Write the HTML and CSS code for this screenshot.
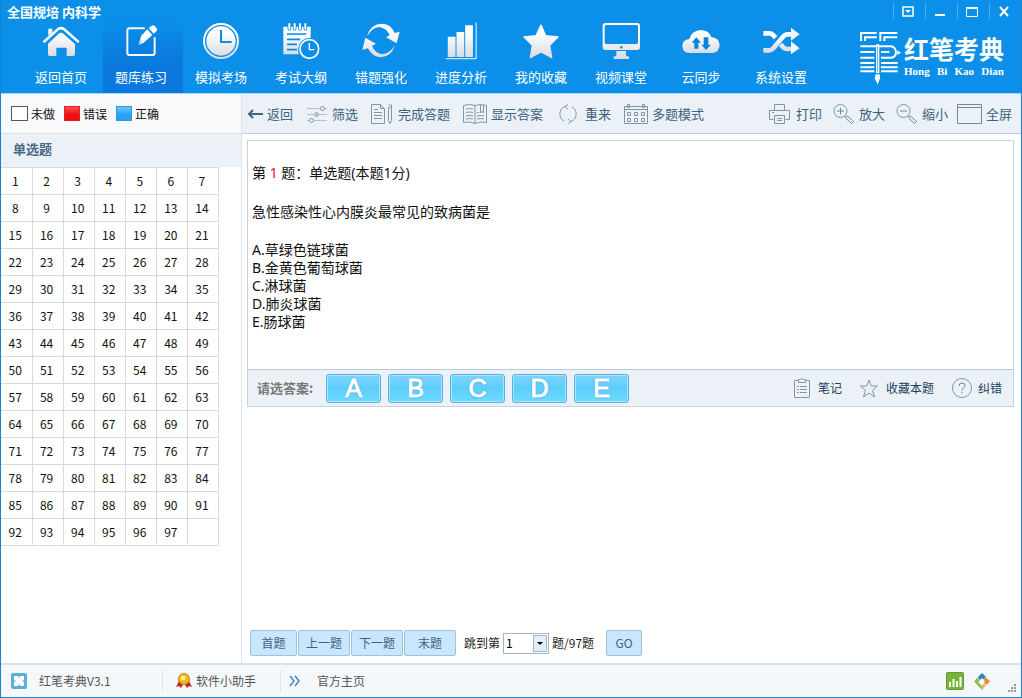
FILE: index.html
```html
<!DOCTYPE html>
<html lang="zh-CN">
<head>
<meta charset="utf-8">
<title>全国规培 内科学</title>
<link rel="stylesheet" href="styles.css">
</head>
<body>
<svg class="defs" aria-hidden="true">
  <defs>
    <linearGradient id="metal" x1="0" y1="0" x2="0" y2="1">
      <stop offset="0.2" stop-color="#ffffff"/>
      <stop offset="1" stop-color="#d9dde2"/>
    </linearGradient>
  </defs>
</svg>
<div class="window">
  <header class="header">
    <div class="header-left">
      <h1 class="title">全国规培 内科学</h1>
      <nav class="nav">
        <button class="nav-item" type="button">
          <svg class="nav-icon" viewBox="130 66 114 114"><path fill="url(#metal)" d="M132 124 L176 84 Q187 76 198 84 L243 124 L238 130 L194 91 Q187 86 180 91 L137 130Z M149 86h12v10l-12 11z M148 131 L180 101 Q187 95 194 101 L229 132 V163 Q229 168 224 168 H204 V146 Q204 143 201 143 H176 Q173 143 173 146 V168 H153 Q148 168 148 163Z"/></svg>
          <span>返回首页</span>
        </button>
        <button class="nav-item active" type="button">
          <svg class="nav-icon" viewBox="368 66 114 114"><path fill="none" stroke="#f4f6f8" stroke-width="6" d="M436 85H391Q384 85 384 92V158Q384 165 391 165H459Q466 165 466 158V112"/><path fill="#fff" d="M448 84 L458 77 Q463 74 467 79 L472 85 Q476 89 471 94 L463 101Z M444 88 L459 105 L433 128 L417 135 L423 118 L425 108Z"/><path stroke="#1483dd" stroke-width="2" d="M417 135 L428 122"/></svg>
          <span>题库练习</span>
        </button>
        <button class="nav-item" type="button">
          <svg class="nav-icon" viewBox="610 66 114 114"><circle cx="667" cy="123" r="51" fill="none" stroke="url(#metal)" stroke-width="6"/><circle cx="667" cy="123" r="44" fill="url(#metal)"/><path fill="none" stroke="#0b8bea" stroke-width="6" d="M667 90V126H699"/></svg>
          <span>模拟考场</span>
        </button>
        <button class="nav-item" type="button">
          <svg class="nav-icon" viewBox="848 66 114 114"><path fill="url(#metal)" d="M852 80H934V113Q902 114 896 146Q896 155 899 163H852Z"/><path fill="none" stroke="#0b8bea" stroke-width="5" d="M863 102H921 M863 118H902 M863 133H893 M863 149H893"/><path fill="none" stroke="#0b8bea" stroke-width="11" stroke-linecap="round" d="M870 74V86 M886 74V86 M902 74V86 M918 74V86"/><path fill="none" stroke="#fff" stroke-width="6" stroke-linecap="round" d="M870 72V86 M886 72V86 M902 72V86 M918 72V86"/><circle cx="930" cy="147" r="28" fill="none" stroke="#fff" stroke-width="5"/><path fill="none" stroke="#fff" stroke-width="4" d="M930 129V149H945"/></svg>
          <span>考试大纲</span>
        </button>
        <button class="nav-item" type="button">
          <svg class="nav-icon" viewBox="71 66 114 114"><path fill="url(#metal)" d="M86 109 Q95 73 129 71 Q158 71 169 99 L184 95 L175 130 L143 112 L154 106 Q145 84 123 81 Q101 82 86 109Z M169 137 Q160 169 127 172 Q102 171 89 145 L72 150 L81 113 L113 131 L101 138 Q110 159 131 163 Q154 160 169 137Z"/></svg>
          <span>错题强化</span>
        </button>
        <button class="nav-item" type="button">
          <svg class="nav-icon" viewBox="308 68 114 118"><path fill="url(#metal)" d="M324 114h24v63h-24z M351 99h24v78h-24z M378 78h24v99h-24z"/><path fill="none" stroke="#fff" stroke-width="3" d="M318 182H412V69"/></svg>
          <span>进度分析</span>
        </button>
        <button class="nav-item" type="button">
          <svg class="nav-icon" viewBox="550 66 114 114"><path fill="url(#metal)" stroke="url(#metal)" stroke-width="4" stroke-linejoin="round" d="M607 75 L621 107 L658 111 L633 136 L639 173 L607 156 L575 173 L581 136 L556 111 L592 107Z"/></svg>
          <span>我的收藏</span>
        </button>
        <button class="nav-item" type="button">
          <svg class="nav-icon" viewBox="790 66 114 114"><path fill="url(#metal)" fill-rule="evenodd" d="M800 69H896Q904 69 904 77V142Q904 150 896 150H800Q792 150 792 142V77Q792 69 800 69Z M803 75Q798 75 798 80V127Q798 132 803 132H893Q898 132 898 127V80Q898 75 893 75Z M833 153H862V169H871V177H825V169H833Z"/><circle cx="848" cy="142" r="4" fill="#2689ce"/></svg>
          <span>视频课堂</span>
        </button>
        <button class="nav-item" type="button">
          <svg class="nav-icon" viewBox="11 66 114 114"><path fill="url(#metal)" d="M33 159 Q12 157 12 137 Q13 119 33 117 Q39 93 66 90 Q91 90 99 111 Q123 114 124 136 Q122 157 103 159Z"/><path fill="#0b83dc" d="M40 128 L54 112 L68 128 H60 V146 H48 V128Z M69 134 L83 150 L98 134 H90 V112 H76 V134Z"/></svg>
          <span>云同步</span>
        </button>
        <button class="nav-item" type="button">
          <svg class="nav-icon" viewBox="249 66 114 114"><path fill="none" stroke="url(#metal)" stroke-width="14" stroke-linejoin="round" d="M253 100H271Q277 100 282 105L290 113 M305 133L313 142Q318 147 323 147H340 M253 151H271Q277 151 282 146L312 110Q318 103 325 103H340"/><path fill="#f4f5f7" d="M336 83L362 103L336 122Z M336 124L362 145L336 163Z"/></svg>
          <span>系统设置</span>
        </button>
      </nav>
    </div>
    <div class="header-right">
      <div class="controls">
        <button class="control" type="button" aria-label="菜单"><svg width="12" height="11" viewBox="0 0 12 11"><path d="M1 1h10v9H1z" fill="none" stroke="#fff" stroke-width="1.5"/><path d="M3 4h6L6 7z" fill="#fff"/></svg></button>
        <button class="control" type="button" aria-label="最小化"><svg width="12" height="11" viewBox="0 0 12 11"><path d="M1 8h10v2H1z" fill="#fff"/></svg></button>
        <button class="control" type="button" aria-label="最大化"><svg width="12" height="11" viewBox="0 0 12 11"><path d="M.5 2.500h11v8H.5z" fill="none" stroke="#fff"/><path d="M0 2h12" stroke="#fff" stroke-width="2"/></svg></button>
        <button class="control" type="button" aria-label="关闭"><svg width="12" height="11" viewBox="0 0 12 11"><path d="M2 1l8 9M10 1l-8 9" stroke="#fff" stroke-width="2"/></svg></button>
      </div>
      <div class="logo">
        <svg width="42" height="54" viewBox="536 96 126 162"><path fill="none" stroke="#fff" stroke-width="6" d="M542 126V102H589 M554 126V115H589 M600 126V102H651 M612 126V115H651 M540 142H632Q646 144 647 160Q646 175 632 176H602 M540 159H582 M602 159H627 M540 176H582 M540 192H582 M602 192H652 M540 205H582 M602 205H652 M540 217H582 M602 217H652"/><path stroke="#fff" stroke-width="10" d="M592 136V222"/><path stroke="#0b8bea" stroke-width="2" d="M592 142V218"/><path fill="#fff" d="M586 226h12q3 12-2 20l-4 11q-2-8-7-14-4-8 1-17z M651 154l11 7-11 7z"/></svg>
        <div class="logo-text">
          <span class="logo-name">红笔考典</span>
          <span class="logo-pinyin"><span>Hong</span><span>Bi</span><span>Kao</span><span>Dian</span></span>
        </div>
      </div>
    </div>
  </header>

  <div class="main">
    <aside class="sidebar">
      <ul class="legend">
        <li><span class="swatch todo"></span>未做</li>
        <li><span class="swatch wrong"></span>错误</li>
        <li><span class="swatch right"></span>正确</li>
      </ul>
      <h2 class="section">单选题</h2>
      <table class="numbers"><tbody id="numbers"></tbody></table>
    </aside>

    <main class="content">
      <div class="toolbar">
        <div class="tools">
          <button class="tool" type="button"><svg width="16" height="12" viewBox="0 0 16 12"><path d="M2 6h14M6 2L2 6l4 4" fill="none" stroke="#416582" stroke-width="2"/></svg>返回</button>
          <button class="tool" type="button"><svg width="22" height="18" viewBox="0 0 22 18"><g fill="none" stroke="#8197a9"><path d="M1 3.500h13M19 3.500h2M1 9.500h7M13 9.500h8M1 15.500h2M8 15.500h13" opacity=".55"/><circle cx="16.500" cy="3.500" r="2"/><path d="M9 8h3v3H9z"/><circle cx="5.500" cy="15.500" r="2"/></g></svg>筛选</button>
          <button class="tool wide" type="button"><svg width="21" height="20" viewBox="0 0 21 20"><path d="M.5.500h9l4 4v15H.5zM9.500.500v4h4M3 5.500h4M3 8.500h8M3 11.500h8M3 14.500h8M17.500 3.500h3v13l-1.500 3-1.500-3zM17.500 1h3v2.500" fill="none" stroke="#8197a9"/></svg>完成答题</button>
          <button class="tool" type="button"><svg width="24" height="20" viewBox="0 0 24 20"><path d="M.5 1.500Q7-.5 12 1.500Q17-.5 23.500 1.500V18.500Q17 17 12 19.500Q7 17 .5 18.500zM12 1.500v18M3 5q4-1 7 0M3 8.500q4-1 7 0M3 12q4-1 7 0M3 15q4-1 7 0M14 8.500h2M14 12q4-1 7 0M14 15q4-1 7 0M17.500 1v8l1.500-1.500L20.500 9V1" fill="none" stroke="#8197a9"/></svg>显示答案</button>
          <button class="tool redo" type="button"><svg width="18" height="20" viewBox="0 0 18 20"><path d="M6 2.500A8 8 0 0 0 5 17M12 17.500A8 8 0 0 0 13 3M9 .500L6 2.500L9 5M9 15L12 17.500L9 20" fill="none" stroke="#8197a9"/></svg>重来</button>
          <button class="tool" type="button"><svg width="24" height="20" viewBox="0 0 24 20"><path d="M.5 2.500h23v17H.5zM.5 5.500h23M3.500.500h2v3h-2zM18.500.500h2v3h-2zM3.500 8.500h3v3h-3zM10.500 8.500h3v3h-3zM17.500 8.500h3v3h-3zM3.500 14.500h3v3h-3zM10.500 14.500h3v3h-3zM17.500 14.500h3v3h-3z" fill="none" stroke="#8197a9"/></svg>多题模式</button>
        </div>
        <div class="tools view">
          <button class="tool wide" type="button"><svg width="21" height="20" viewBox="0 0 21 20"><path d="M5.500 7V.500h10V7M4.500 15.500h-4v-9h20v9h-4M5.500 11.500h10v8h-10zM8 14.500h5M8 16.500h5M3 8.500h2" fill="none" stroke="#8197a9"/></svg>打印</button>
          <button class="tool" type="button"><svg width="22" height="20" viewBox="0 0 22 20"><circle cx="7.500" cy="7" r="6.500" fill="none" stroke="#8197a9"/><path d="M4 7h7M7.500 3.500v7M12 11.500l1.500 1.500M12.500 14l2-2 6 5.500-2 2z" fill="none" stroke="#71899d"/></svg>放大</button>
          <button class="tool" type="button"><svg width="22" height="20" viewBox="0 0 22 20"><circle cx="7.500" cy="7" r="6.500" fill="none" stroke="#8197a9"/><path d="M4 7h7M12 11.500l1.500 1.500M12.500 14l2-2 6 5.500-2 2z" fill="none" stroke="#71899d"/></svg>缩小</button>
          <button class="tool full" type="button"><svg width="25" height="20" viewBox="0 0 25 20"><path d="M.5.500h24v19H.5zM.5 3.500h24" fill="none" stroke="#71899d"/></svg>全屏</button>
        </div>
      </div>

      <section class="card">
        <div class="question">
          <p>第 <span class="red">1</span> 题<span class="colon">：</span>单选题(本题1分)</p>
          <p>急性感染性心内膜炎最常见的致病菌是</p>
          <ul class="options">
            <li>A.草绿色链球菌</li>
            <li>B.金黄色葡萄球菌</li>
            <li>C.淋球菌</li>
            <li>D.肺炎球菌</li>
            <li>E.肠球菌</li>
          </ul>
        </div>
        <div class="answer-bar">
          <span class="answer-label">请选答案:</span>
          <div class="answers">
            <button class="answer" type="button">A</button>
            <button class="answer" type="button">B</button>
            <button class="answer" type="button">C</button>
            <button class="answer" type="button">D</button>
            <button class="answer" type="button">E</button>
          </div>
          <div class="actions">
            <button class="action" type="button"><svg width="16" height="20" viewBox="0 0 16 20"><path d="M4 2.500H.5v17h15v-17H12M4.500 4.500v-3h2q1.500-2 3 0h2v3zM3 8.500h2M6 8.500h7M3 11.500h2M6 11.500h7M3 14.500h2M6 14.500h7" fill="none" stroke="#8197a9"/></svg>笔记</button>
            <button class="action" type="button"><svg width="18" height="19" viewBox="0 0 18 19"><path d="M9 1l2.200 6H17.500l-5 4.300L14.500 18 9 14l-5.500 4 2-6.700L.5 7h6.300z" fill="none" stroke="#8197a9"/></svg>收藏本题</button>
            <button class="action tight" type="button"><svg width="20" height="20" viewBox="0 0 20 20"><circle cx="10" cy="10" r="9.500" fill="none" stroke="#8197a9"/><path d="M7 8q0-3 3-3t3 2.500q0 1.500-1.500 2.500T10 12.500M10 14v1.500" fill="none" stroke="#71899d"/></svg>纠错</button>
          </div>
        </div>
      </section>

      <div class="pager">
        <div class="pager-buttons">
          <button class="page-button short" type="button">首题</button>
          <button class="page-button" type="button">上一题</button>
          <button class="page-button" type="button">下一题</button>
          <button class="page-button" type="button">末题</button>
        </div>
        <label for="jump">跳到第</label>
        <span class="select-box">
          <select id="jump"><option>1</option><option>2</option><option>3</option></select>
          <svg class="select-arrow" width="14" height="17" viewBox="0 0 14 17"><path d="M.5.500h13v16H.5z" fill="#e3edf9" stroke="#9fb8ce"/><path d="M4 7h6L7 10z" fill="#000"/></svg>
        </span>
        <span>题/97题</span>
        <button class="page-button go" type="button">GO</button>
      </div>
    </main>
  </div>

  <footer class="footer">
    <div class="foot-item brand"><svg width="16" height="16" viewBox="0 0 16 16"><rect width="16" height="16" rx="2" fill="#5eb0d2"/><path d="M3 3h4l1 2 1-2h4v4l-2 1 2 1v4H9l-1-2-1 2H3V9l2-1-2-1z" fill="#fff"/></svg><span>红笔考典V3.1</span></div>
    <div class="foot-item helper"><svg width="16" height="16" viewBox="0 0 16 16"><path d="M3 8L0 14l3-1 2 2 3-5 3 5 2-2 3 1-3-6z" fill="#b52b20"/><circle cx="8" cy="6" r="5.500" fill="#f2b51f" stroke="#c88414"/><circle cx="7" cy="5" r="2.500" fill="#ffe995"/></svg><span>软件小助手</span></div>
    <a class="foot-item home" href="#"><svg width="12" height="12" viewBox="0 0 12 12"><path d="M1 1l4 5-4 5M6 1l4 5-4 5" fill="none" stroke="#4b83b5" stroke-width="1.500"/></svg><span>官方主页</span></a>
    <div class="tray">
      <svg width="18" height="18" viewBox="0 0 18 18"><rect x=".5" y=".5" width="17" height="17" rx="1" fill="#78b43c" stroke="#5f9c2c"/><path d="M3 10h2v5H3zM6.500 7h2v8h-2zM10 9h2v6h-2zM13.500 5h2v10h-2z" fill="#fff"/></svg>
      <svg width="16" height="17" viewBox="0 0 16 17"><path d="M4 4l4-4 4 4-2.500 2.500L8 5 6 7z" fill="#2c82c4"/><path d="M3.500 4.500L6 7 4.500 9 8 13v4L0 8.500z" fill="#8dbf55"/><path d="M12 4.500l4 4L12.500 12 10 9.500 11 8.500 9.500 7z" fill="#ef8840"/><path d="M12 12.500L8 17v-4l2-3z" fill="#f4b65a"/></svg>
    </div>
    <svg class="grip" width="9" height="9" viewBox="0 0 9 9"><path d="M6 0h2v2H6zM3 3h2v2H3zM6 3h2v2H6zM0 6h2v2H0zM3 6h2v2H3zM6 6h2v2H6z" fill="#8c9aa5"/></svg>
  </footer>
</div>
<script src="numbers.js"></script>
</body>
</html>
```

FILE: styles.css
```css
* { box-sizing: border-box; }

body {
  margin: 0;
  font-family: "Noto Sans CJK SC", sans-serif;
  font-size: 12px;
  line-height: 18px;
  color: #111;
}

h1, h2, p, ul { margin: 0; padding: 0; font-size: inherit; }
ul { list-style: none; }
svg { display: block; flex: none; }

button {
  margin: 0;
  padding: 0;
  border: 0;
  background: none;
  font: inherit;
  color: inherit;
  white-space: nowrap;
}

.defs { position: absolute; width: 0; height: 0; }

.window {
  display: flex;
  flex-direction: column;
  min-height: 100vh;
  border: 1px solid #1683c9;
  border-top: 0;
}

/* Header */
.header {
  display: flex;
  justify-content: space-between;
  height: 94px;
  background: #0b8fe9;
  border-bottom: 1px solid #a5dafa;
  color: #fff;
}

.title {
  height: 20px;
  padding: 4px 0 0 6px;
  font-size: 13px;
  font-weight: 700;
  line-height: 16px;
}

.nav { display: flex; padding-left: 22px; }

.nav-item {
  display: flex;
  flex-direction: column;
  align-items: center;
  gap: 8px;
  width: 80px;
  height: 73px;
  padding: 2px 4px 0 0;
  font-size: 13px;
}

.nav-item.active { background: linear-gradient(#0b8fe9, #0a78dc 60%, #0a78dc); }
.nav-icon { width: 38px; height: 38px; }

.header-right { display: flex; flex-direction: column; align-items: flex-end; }
.controls { display: flex; padding-top: 3px; }

.control {
  display: flex;
  align-items: center;
  justify-content: center;
  width: 32px;
  height: 16px;
  padding-right: 4px;
  border-left: 1px solid #47adf0;
}

.logo { display: flex; gap: 3px; padding: 12px 17px 0 0; }
.logo-text { display: flex; flex-direction: column; padding-top: 5px; }

.logo-name {
  font-family: "Liberation Sans", "Noto Sans CJK SC", sans-serif;
  font-size: 25px;
  font-weight: 700;
  line-height: 29px;
}

.logo-pinyin {
  display: flex;
  justify-content: space-between;
  font: 700 11px/12px "Liberation Serif", serif;
}

/* Body columns */
.main { display: grid; grid-template-columns: 241px 1fr; flex: 1; }
.sidebar { border-right: 1px solid #dce5ec; }

.legend {
  display: flex;
  align-items: center;
  gap: 9px;
  height: 40px;
  padding-left: 10px;
  background: #f8f9fa;
  border-bottom: 1px solid #d9e1e7;
}

.legend li { display: flex; align-items: center; gap: 3px; }
.swatch { width: 16px; height: 15px; }
.swatch.todo { width: 17px; border: 1px solid #555; background: #fff; }
.swatch.wrong { border: 1px solid #d8252c; background: linear-gradient(#ff4a4a, #f20d12 60%); }
.swatch.right { border: 1px solid #3197dc; background: linear-gradient(#6cc3fb, #27a2f5 60%); }

.section {
  height: 33px;
  padding: 0 12px;
  background: #ebf1f6;
  color: #4a6785;
  font-size: 13px;
  line-height: 30px;
}

.numbers { border-collapse: collapse; table-layout: fixed; width: 218px; }

.numbers td {
  height: 27px;
  padding: 0;
  border: 1px solid #d8dcdf;
  border-left-width: 0;
  text-align: center;
}

.number { width: 100%; padding-right: 2px; }

/* Toolbar */
.content { display: flex; flex-direction: column; }

.toolbar {
  display: flex;
  align-items: center;
  justify-content: space-between;
  height: 40px;
  padding: 0 9px 0 5px;
  background: #ebf1f6;
  border-bottom: 1px solid #b9d0e2;
  color: #3f6280;
  font-size: 13px;
}

.tools { display: flex; gap: 13px; }
.tools.view { gap: 11px; }
.tool { display: flex; align-items: center; gap: 4px; }
.tool.wide { gap: 6px; }
.tool.redo { gap: 8px; padding-left: 3px; }
.tool.full { margin-left: -2px; }

/* Question card */
.card { margin: 6px 7px 0 5px; border: 1px solid #c3d3e0; }

.question {
  display: flex;
  flex-direction: column;
  gap: 20px;
  padding: 22px 4px 38px;
  font-family: "Noto Sans", "Noto Sans CJK SC", sans-serif;
  font-size: 14px;
  line-height: 19px;
}

.options { line-height: 18px; }
.colon { font-family: "Noto Sans CJK TC", sans-serif; }
.red { color: #e0102c; }

.answer-bar {
  display: flex;
  align-items: center;
  height: 37px;
  padding: 0 11px 0 9px;
  background: #ebf1f6;
  border-top: 1px solid #b5cddd;
}

.answer-label { width: 69px; color: #777; font-size: 13px; font-weight: 700; }
.answers { display: flex; gap: 7px; }

.answer {
  width: 55px;
  height: 29px;
  border: 1px solid #5bb1e2;
  border-radius: 3px;
  background: linear-gradient(#7fd2fd, #5dcdfc 50%, #6ddcff);
  box-shadow: inset 0 0 0 1px #a6e4ff;
  color: #fff;
  font: 25px/27px "Liberation Sans", sans-serif;
  -webkit-text-stroke: 1px #fff;
  text-shadow: 0 0 2px #2184c0, 0 1px 1px #3c9fd6;
}

.actions { display: flex; gap: 18px; margin-left: auto; color: #20405f; }
.action { display: flex; align-items: center; gap: 8px; }
.action.tight { gap: 6px; }

/* Pager */
.pager {
  display: flex;
  align-items: center;
  gap: 3px;
  margin-top: auto;
  padding: 0 8px 7px;
  color: #222;
}

.pager-buttons { display: flex; gap: 1px; margin-right: 5px; }

.page-button {
  width: 52px;
  height: 26px;
  border: 1px solid #9dc3de;
  border-radius: 2px;
  background: #c9e6fc;
  color: #3d6484;
}

.page-button.short { width: 47px; }
.page-button.go { width: 36px; margin-left: 9px; }

.select-box { position: relative; }

.select-box select {
  display: block;
  width: 46px;
  height: 21px;
  padding: 0 2px;
  border: 1px solid #9fb8ce;
  border-radius: 0;
  appearance: none;
  background: #fff;
  font: inherit;
  color: #000;
}

.select-arrow { position: absolute; top: 2px; right: 2px; pointer-events: none; }

/* Footer */
.footer {
  display: flex;
  align-items: center;
  height: 34px;
  border-top: 2px solid #d5e2ea;
  background: #f4f8fb;
  color: #555;
}

.foot-item { display: flex; align-items: center; color: inherit; text-decoration: none; }
.brand { width: 162px; padding-left: 10px; gap: 12px; }
.helper { width: 118px; padding-left: 13px; gap: 4px; }
.brand, .helper { height: 22px; border-right: 1px solid #e0e7ec; }
.home { padding-left: 8px; gap: 16px; }
.tray { display: flex; align-items: center; gap: 10px; margin: 0 18px 0 auto; }
.grip { align-self: flex-end; margin: 0 4px 4px 0; }
```

FILE: numbers.js
```js
const TOTAL = 97;
const COLUMNS = 7;
const body = document.getElementById("numbers");

for (let start = 1; start <= TOTAL; start += COLUMNS) {
  const row = body.insertRow();
  for (let n = start; n < start + COLUMNS; n++) {
    const cell = row.insertCell();
    if (n > TOTAL) continue;
    const button = document.createElement("button");
    button.type = "button";
    button.className = "number";
    button.textContent = n;
    cell.append(button);
  }
}
```
